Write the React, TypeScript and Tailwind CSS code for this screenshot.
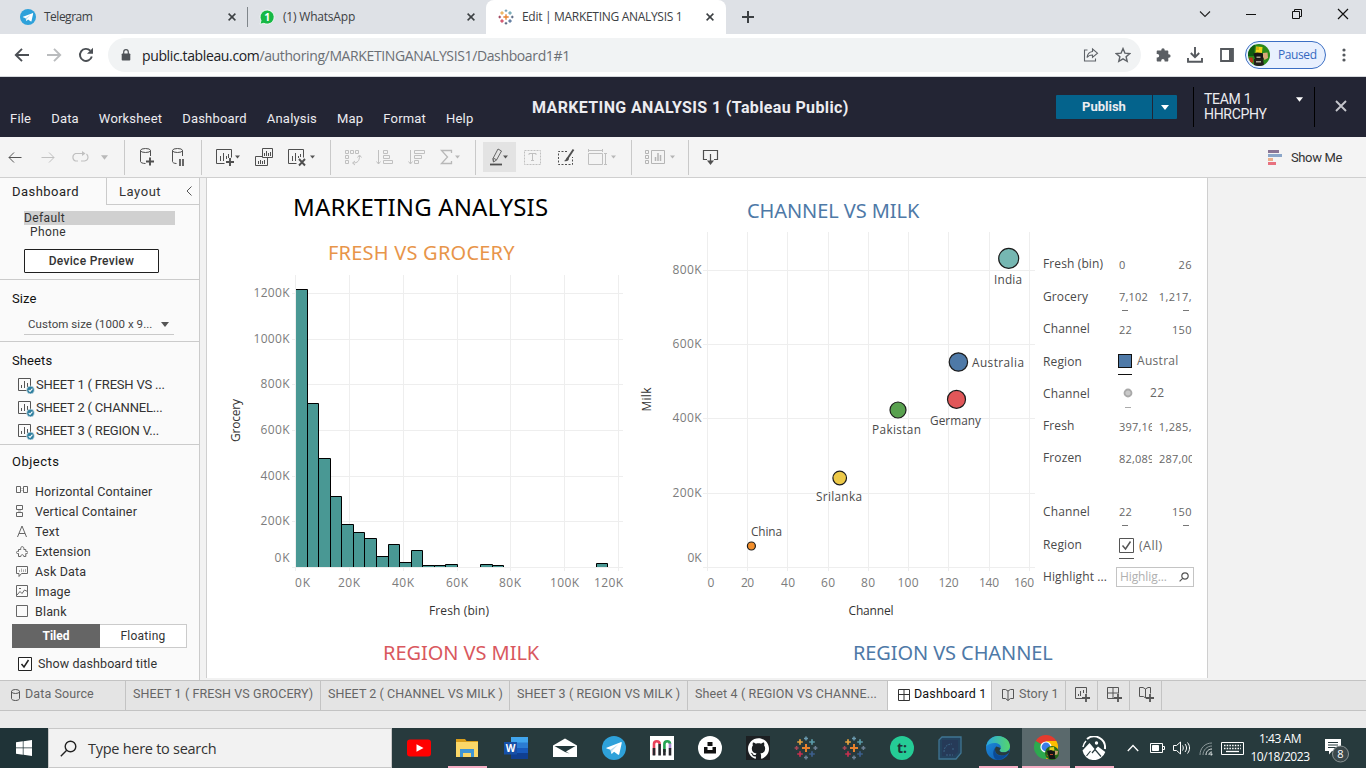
import React from "react";
import { SiGithub } from "react-icons/si";

type Kids = { children?: React.ReactNode };

/* ---------- shared icons ---------- */

function Telegram({ className }: { className: string }) {
  return (
    <svg viewBox="0 0 24 24" className={className}>
      <circle cx="12" cy="12" r="12" fill="#2ea1da" />
      <path d="M4.5 11.8 18.6 6.2c.8-.3 1.3.2 1.1 1.1l-2.4 10.6c-.2.9-.8 1-1.5.6l-3.7-2.7-1.9 1.8c-.5.4-.9.2-1-.3l-.7-3.6-3.9-1.2c-.5-.2-.5-.5-.1-.7z" fill="#fff" />
      <path d="m8.6 13.4 7.6-4.9-5.8 6-.4 2.8z" fill="#b9dcef" />
    </svg>
  );
}

function TableauMark({ className, dim }: { className: string; dim?: boolean }) {
  const plus = (x: number, y: number, r: number, c: string, w: number) => (
    <path key={`${x}-${y}`} d={`M${x - r} ${y}h${2 * r}M${x} ${y - r}v${2 * r}`} stroke={c} strokeWidth={w} />
  );
  const slate = dim ? "#6d8196" : "#4b5a77";
  return (
    <svg viewBox="0 0 24 24" className={className} fill="none">
      {plus(12, 12, 4, "#e8812d", 2)}
      {plus(6, 6, 2.8, "#e8a33d", 1.7)}
      {plus(18, 6, 2.8, "#5b9aa8", 1.7)}
      {plus(6, 18, 2.8, "#c9304f", 1.7)}
      {plus(18, 18, 2.8, "#3d5f8c", 1.7)}
      {plus(12, 2.6, 2, "#6b9bb0", 1.5)}
      {plus(12, 21.4, 2, slate, 1.5)}
      {plus(2.6, 12, 2, dim ? "#a94758" : "#9a3550", 1.5)}
      {plus(21.4, 12, 2, slate, 1.5)}
    </svg>
  );
}

function TabClose({ className }: { className: string }) {
  return (
    <svg viewBox="0 0 8 8" className={`h-2 w-2 shrink-0 ${className}`}>
      <path d="m.6.6 6.8 6.8M7.4.6.6 7.4" stroke="#3c4043" strokeWidth="1.5" />
    </svg>
  );
}

function Caret({ className, color = "#555" }: { className: string; color?: string }) {
  return (
    <svg viewBox="0 0 8 5" className={className}>
      <path d="M0 0h8L4 5z" fill={color} />
    </svg>
  );
}

/* ---------- browser chrome ---------- */

function TabStrip() {
  return (
    <div className="flex h-[34px] shrink-0 bg-[#dee1e6] font-['Open_Sans',sans-serif] text-[12px] tracking-[-0.3px] text-[#3c4043]">
      <div className="flex w-[248px] items-center pl-5">
        <Telegram className="h-4 w-4" />
        <span className="ml-2 flex-1 tracking-[-0.5px]">Telegram</span>
        <TabClose className="mr-[11px]" />
        <div className="h-5 w-px bg-[#80868b]" />
      </div>
      <div className="flex w-[238px] items-center pl-[11px]">
        <svg viewBox="0 0 16 16" className="h-4 w-4">
          <path d="M1 15.2 2 11.5A7 7 0 1 1 4.900 14.300z" fill="#17b845" stroke="#fff" strokeWidth=".8" />
          <text x="8.200" y="11.700" fontSize="10.500" fontWeight="700" fill="#fff" textAnchor="middle" fontFamily="Open Sans">1</text>
        </svg>
        <span className="ml-2 flex-1 tracking-[-0.2px]">(1) WhatsApp</span>
        <TabClose className="mr-[11px]" />
      </div>
      <div className="flex w-[240px] items-center rounded-t-lg bg-white pl-3">
        <TableauMark className="h-4 w-4" />
        <span className="ml-2 flex-1 whitespace-nowrap">Edit | MARKETING ANALYSIS 1</span>
        <TabClose className="mr-[12px]" />
      </div>
      <div className="flex flex-1 items-center pl-[16px]">
        <svg viewBox="0 0 12 12" className="h-3 w-3">
          <path d="M6 0v12M0 6h12" stroke="#3c4043" strokeWidth="2" />
        </svg>
      </div>
      <div className="flex h-7 items-center text-black">
        <svg viewBox="0 0 12 12" className="mr-[34px] h-3 w-3" fill="none" stroke="#222" strokeWidth="1.100">
          <path d="m1 3.500 5 5 5-5" />
        </svg>
        <svg viewBox="0 0 12 12" className="mr-[34px] h-3 w-3" fill="none" stroke="#111">
          <path d="M1 6.500h10" />
        </svg>
        <svg viewBox="0 0 12 12" className="mr-[34px] h-3 w-3" fill="none" stroke="#111">
          <path d="M1.500 3.500h7v7h-7zM3.500 3.500v-2h7v7h-2" />
        </svg>
        <svg viewBox="0 0 12 12" className="mr-[17px] h-3 w-3" fill="none" stroke="#111" strokeWidth="1.200">
          <path d="m1 1 10 10M11 1 1 11" />
        </svg>
      </div>
    </div>
  );
}

function AddressBar() {
  return (
    <div className="flex h-[43px] shrink-0 items-center border-b border-[#d5d8dc] bg-white pl-[14px] font-['Open_Sans',sans-serif]">
      <svg viewBox="0 0 16 16" className="h-4 w-4" fill="none" stroke="#4b4f54" strokeWidth="1.900">
        <path d="M15 8H2M8 1.800 1.800 8 8 14.200" />
      </svg>
      <svg viewBox="0 0 16 16" className="ml-4 h-4 w-4" fill="none" stroke="#babcbe" strokeWidth="1.900">
        <path d="M1 8h13M8 1.800 14.200 8 8 14.200" />
      </svg>
      <svg viewBox="0 0 16 16" className="ml-4 h-4 w-4" fill="none">
        <path d="M13.800 9.500A6 6 0 1 1 12.300 3.700" stroke="#4b4f54" strokeWidth="1.900" />
        <path d="M15 .8v6H9z" fill="#4b4f54" />
      </svg>
      <div className="ml-[14px] flex h-[34px] w-[1033px] items-center rounded-full bg-[#f1f3f4] pl-[13px]">
        <svg viewBox="0 0 10 12" className="h-3 w-[10px]">
          <path d="M1.500 4.500h7c.5 0 .8.3.8.8v5.400c0 .5-.3.8-.8.8h-7c-.5 0-.8-.3-.8-.8V5.300c0-.5.3-.8.8-.8z" fill="#4e5257" />
          <path d="M2.700 5V3a2.300 2.300 0 0 1 4.600 0v2" fill="none" stroke="#4e5257" strokeWidth="1.200" />
        </svg>
        <span className="ml-[11px] flex-1 text-[14px] tracking-[-0.37px] text-[#6b6f74]">
          <span className="text-[#202124]">public.tableau.com</span>/authoring/MARKETINGANALYSIS1/Dashboard1#1
        </span>
        <svg viewBox="0 0 16 16" className="h-4 w-4" fill="none" stroke="#5f6368" strokeWidth="1.100">
          <path d="M4.500 3H1.500v11h11v-2.500M9.500 2l5 4.200-5 4.200V8c-2.500 0-4.300.8-5.500 2.500C4.400 7 6.200 4.900 9.500 4.500z" />
        </svg>
        <svg viewBox="0 0 16 16" className="mr-[10px] ml-4 h-4 w-4" fill="none" stroke="#5f6368" strokeWidth="1.400">
          <path d="m8 1.600 1.900 4.500 4.900.4-3.700 3.200 1.100 4.700L8 11.900l-4.200 2.500 1.100-4.700L1.200 6.500l4.900-.4z" />
        </svg>
      </div>
      <svg viewBox="0 0 16 16" className="ml-[14px] h-4 w-4" fill="#5a5e63">
        <path d="M6.300 2.900a1.700 1.700 0 0 1 3.400 0v.6h2.600c.6 0 1 .4 1 1v2.700h.5a1.800 1.800 0 0 1 0 3.600h-.5v2.700c0 .6-.4 1-1 1H9.600v-.7a1.700 1.700 0 0 0-3.400 0v.7H2.700c-.6 0-1-.4-1-1v-3.100h.8a1.700 1.700 0 0 0 0-3.400h-.8V4.500c0-.6.4-1 1-1h3.600z" />
      </svg>
      <svg viewBox="0 0 16 16" className="ml-4 h-4 w-4" fill="none" stroke="#55595e" strokeWidth="1.900">
        <path d="M8 0v10M3.800 6 8 10.200 12.200 6M1 11v3.700h14V11" />
      </svg>
      <svg viewBox="0 0 14 14" className="ml-[17px] h-[14px] w-[14px]" fill="none">
        <path d="M1 1h12v12H1z" stroke="#55595e" strokeWidth="1.800" />
        <path d="M9 1h4v12H9z" fill="#55595e" />
      </svg>
      <div className="ml-[11px] flex h-7 w-[81px] items-center rounded-full border border-[#3b6fc4] bg-[#e8f0fe] pl-[2px]">
        <svg viewBox="0 0 22 22" className="h-[22px] w-[22px]">
          <defs>
            <clipPath id="avatar"><circle cx="11" cy="11" r="11" /></clipPath>
          </defs>
          <g clipPath="url(#avatar)">
            <path d="M0 0h22v22H0z" fill="#2a8a1a" />
            <path d="M0 0h7l-1 12H0z" fill="#0f5a12" />
            <path d="M8 2.500l6.500.5-.5 6H7.500z" fill="#f0d51c" />
            <path d="M8 3h3v3H8z" fill="#d9b010" />
            <path d="M5.500 9.500 9 8.500l5 .5 2.500 3-1 3.500H7z" fill="#161616" />
            <path d="M15 9l4.500-.5L20 14l-3.500 2-1.500-3z" fill="#d9a878" />
            <path d="m6 15 9-.5 1 7.500H6z" fill="#241f1a" />
            <path d="M8.500 12.500h4V14h-4zM8 17h5v1.500H8z" fill="#a9a594" />
            <path d="M1 13.500h3.500l1 5H2z" fill="#b8381a" />
          </g>
        </svg>
        <span className="ml-[8px] text-[12px] tracking-[-0.4px] text-[#3568c0]">Paused</span>
      </div>
      <svg viewBox="0 0 4 14" className="ml-4 h-[14px] w-1" fill="#55595e">
        <circle cx="2" cy="2" r="1.600" /><circle cx="2" cy="7" r="1.600" /><circle cx="2" cy="12" r="1.600" />
      </svg>
    </div>
  );
}

/* ---------- Tableau header and toolbar ---------- */

const menus = ["File", "Data", "Worksheet", "Dashboard", "Analysis", "Map", "Format", "Help"];

function Header() {
  return (
    <div className="flex h-[60px] shrink-0 bg-[#232534] font-['Roboto',sans-serif] text-[#ececf0]">
      <div className="flex w-[532px] items-end gap-5 pb-[10px] pl-[10px] text-[13px] leading-4 tracking-[0.19px]">
        {menus.map((m) => <span key={m}>{m}</span>)}
      </div>
      <div className="w-[524px] pt-[21px] text-[16px] leading-5 font-bold tracking-[0.37px] whitespace-nowrap">MARKETING ANALYSIS 1 (Tableau Public)</div>
      <div className="flex h-full w-[137px] items-center">
        <div className="flex h-6 w-24 items-center justify-center rounded-l-[1px] bg-[#04638c] text-[13px] font-bold">Publish</div>
        <div className="ml-px flex h-6 w-6 items-center justify-center rounded-r-[1px] bg-[#04638c]">
          <Caret className="h-[5px] w-2" color="#fff" />
        </div>
      </div>
      <div className="mt-[10px] flex h-10 w-[122px] border-x border-black pl-[10px] text-[14px] leading-[15px]">
        <span className="w-[92px] pt-[5px] tracking-[-0.3px]">TEAM 1 HHRCPHY</span>
        <Caret className="mt-[10px] h-[5px] w-[7px]" color="#fff" />
      </div>
      <svg viewBox="0 0 12 12" className="mt-[23px] ml-5 h-3 w-3">
        <path d="m1 1 10 10M11 1 1 11" stroke="#c5c6cc" strokeWidth="1.900" />
      </svg>
    </div>
  );
}

const DARK = "#4f4f4f";
const DIM = "#c0c0c0";

function Glyph({ className, d, color = DARK, children }: { className: string; d?: string; color?: string } & Kids) {
  return (
    <svg viewBox="0 0 20 20" className={`h-5 w-5 shrink-0 ${className}`} fill="none" stroke={color} strokeWidth="1">
      {d && <path d={d} />}
      {children}
    </svg>
  );
}

function Sep({ className }: { className: string }) {
  return <div className={`h-[35px] w-px shrink-0 bg-[#c9c9c9] ${className}`} />;
}

function Toolbar() {
  const tc = "h-1 w-[5px] shrink-0";
  return (
    <div className="flex h-[41px] shrink-0 items-center border-b border-[#cfcfcf] bg-[#f4f4f4] font-['Roboto',sans-serif]">
      <Glyph className="ml-[5px]" d="M16.500 10.500H4M9 5.500l-5 5 5 5" color="#555" />
      <Glyph className="ml-[13px]" d="M3.500 10.500H16M11 5.500l5 5-5 5" color={DIM} />
      <Glyph className="ml-[12px]" color={DIM}>
        <path d="M8 14H5.500a4 4 0 0 1 0-7.500H13M11 14h3.500a4 4 0 0 0 3.500-3.700c0-1.500-.6-2.500-1.500-3.300" strokeWidth="1.200" />
        <path d="m12 4 3.500 2.500L12 9z" fill={DIM} stroke="none" />
      </Glyph>
      <Caret className="ml-[11px] h-[5px] w-[7px]" color="#b9b9b9" />
      <Sep className="ml-[16px]" />
      <Glyph className="ml-[12px]">
        <ellipse cx="8.500" cy="3.500" rx="5" ry="2" />
        <path d="M3.500 3.500v11c0 1 2 2 5 2M13.500 3.500v5.500" />
        <path d="M13 10.500v8M9 14.500h8" strokeWidth="1.900" />
      </Glyph>
      <Glyph className="ml-[12px]">
        <ellipse cx="8.500" cy="3.500" rx="5" ry="2" />
        <path d="M3.500 3.500v11c0 1 1.600 2 4 2M13.500 3.500v5.500" />
        <path d="M11 12v7M14 12v7" strokeWidth="1.700" />
      </Glyph>
      <Sep className="ml-[12px]" />
      <Glyph className="ml-[13px]">
        <path d="M9.500 16.500h-8v-14h15v8M5.500 14v-5M8.500 14V6M11.500 12V9M13.500 11V7" />
        <path d="M15 11v8M11 15h8" strokeWidth="1.900" />
      </Glyph>
      <Caret className={tc} />
      <Glyph className="ml-[14px]">
        <path d="M8.500 1.500h10v9h-10zM8 9.500H1.500v9h12v-7.500M10.500 9V6M12.500 9V4M14.500 9V6M16.500 9V5M4.500 17v-3M6.500 17v-4M8.500 17v-3M10.500 17v-4" />
      </Glyph>
      <Glyph className="ml-[13px]">
        <path d="M9.500 16.500h-8v-14h15v8M5.500 14v-5M8.500 14V6M11.500 11V9M13.500 10V7" />
        <path d="m12 12 6 6.500M18 12l-6 6.500" strokeWidth="1.900" />
      </Glyph>
      <Caret className={`${tc} ml-[3px]`} />
      <Sep className="ml-[15px]" />
      <Glyph className="ml-[13px]" color={DIM}>
        <path d="M1.500 3.500h3v3h-3zM6.500 3.500h3v3h-3zM11.500 3.500h3v3h-3zM1.500 8.500h3v3h-3zM1.500 13.500h3v3h-3z" />
        <path d="M15.500 9c0 5-2 7-6.500 7M13.500 10.500l2-2.500 2 2.500M11 14l-2.500 2 2.500 2" />
      </Glyph>
      <Glyph className="ml-[11px]" color={DIM} d="M3.500 3v14M1.500 14.500l2 2.500 2-2.500M8.500 3.500h4v3h-4zM8.500 8.500h6v3h-6zM8.500 13.500h9v3h-9z" />
      <Glyph className="ml-[12px]" color={DIM} d="M3.500 3v14M1.500 14.500l2 2.500 2-2.500M7.500 3.500h10v3h-10zM7.500 8.500h7v3h-7zM7.500 13.500h4v3h-4z" />
      <Glyph className="ml-[10px]" color="#b8b8b8">
        <path d="M14.500 6V3.500h-10l6 6.500-6 6.500h10V14" strokeWidth="1.300" />
      </Glyph>
      <Caret className={`${tc} -ml-[2px]`} color="#b8b8b8" />
      <Sep className="ml-[15px]" />
      <div className="ml-[7px] flex h-[30px] w-[33px] shrink-0 items-center bg-[#e3e3e3]">
        <Glyph className="ml-[4px]">
          <path d="m6 11.500 5-9.500 3.500 2-5 9-3 2zM6.300 11l3.500 2M6.500 15l-.5-3.500" stroke="#666" />
          <path d="M3 17.500h12" strokeWidth="1.800" />
        </Glyph>
        <Caret className="-ml-[4px] h-1 w-[5px] shrink-0" />
      </div>
      <Glyph className="ml-[7px]" color={DIM}>
        <path d="M1.500 3.500h16v14h-16z" strokeDasharray="2 1" />
        <path d="M6 8V6.500h7V8M9.500 6.500v7M8 13.500h3" />
      </Glyph>
      <Glyph className="ml-[14px]">
        <path d="M10 4.500H1.500v13h14V10" strokeDasharray="2 1.500" />
        <path d="m16.500 2.500-6 9" strokeWidth="1.900" />
        <path d="M10.500 10.500c-2 .5-1 2.500-3.500 3.500 3 .8 5-.5 5-2.500z" fill={DARK} stroke="none" />
      </Glyph>
      <Glyph className="ml-[10px]" color={DIM}>
        <path d="M1.500 6.500h14v11h-14zM1 3.500h15M1.500 2v3M15.500 2v3M18.500 7v10M17 6.500h3M17 17.500h3" />
      </Glyph>
      <Caret className={`${tc} ml-[4px]`} color="#b8b8b8" />
      <Sep className="ml-[15px]" />
      <Glyph className="ml-[13px]" color="#b5b5b5">
        <path d="M.5 3.500h3v3h-3zM.5 8.500h3v3h-3zM.5 13.500h3v3h-3zM6.500 3.500h13v13h-13z" />
        <path d="M10.500 14v-4M13 14V6M15.500 14V8" strokeWidth="1.500" />
      </Glyph>
      <Caret className={`${tc} ml-[5px]`} color="#b5b5b5" />
      <Sep className="ml-[13px]" />
      <Glyph className="ml-[13px]">
        <path d="M5 12.500H1.500v-9h14v9H12M8.500 7v8" strokeWidth="1.200" />
        <path d="M5 13.500h7L8.500 18z" fill={DARK} stroke="none" />
      </Glyph>
      <div className="flex-1" />
      <svg viewBox="0 0 14 15" className="h-[15px] w-[14px]">
        <path d="M0 0h11v3H0z" fill="#8a7595" /><path d="M0 4h14v3H0z" fill="#8ba6c9" />
        <path d="M0 8h5v3H0z" fill="#eaae8b" /><path d="M0 12h8v3H0z" fill="#e8717f" />
      </svg>
      <span className="mr-[24px] ml-[9px] pt-[2px] text-[13px] tracking-[-0.35px] text-[#333]">Show Me</span>
    </div>
  );
}

/* ---------- left panel ---------- */

function SheetItem({ name }: { name: string }) {
  return (
    <div className="flex h-[23px] items-center pl-[18px] text-[13px] tracking-[-0.2px]">
      <svg viewBox="0 0 17 17" className="mt-[1px] h-[17px] w-[17px] shrink-0" fill="none">
        <path d="M.5 1.500h12v12H.5zM3.500 11V8M6.500 11V4M9.500 11V6" stroke="#555" />
        <circle cx="12.500" cy="13" r="3.900" fill="#2f7f9f" stroke="#fafafa" strokeWidth=".6" />
        <path d="m10.700 13 1.300 1.400 2.400-2.700" stroke="#fff" strokeWidth="1.100" />
      </svg>
      <span className="ml-[1px] whitespace-nowrap">{name}</span>
    </div>
  );
}

const objects: { name: string; icon: React.ReactNode }[] = [
  { name: "Horizontal Container", icon: <><path d="M.5 1.500h4v6h-4zM7.500 1.500h4v6h-4z" /><path d="M5 3.500h2M5 5.500h2" stroke="#c4c4c4" /></> },
  { name: "Vertical Container", icon: <><path d="M.5.500h6v4h-6zM.5 7.500h6v4h-6z" /><path d="M2 6h3" stroke="#999" /></> },
  { name: "Text", icon: <path d="M1.500 12 6 1l4.500 11M3 8.500h6" /> },
  { name: "Extension", icon: <path d="M2.500 11.500v-3c-3 .6-3-2.700 0-2V4.500h2.300c-1-3.800 4-3.800 3 0h2v2c2.900-.7 2.900 2.600 0 2v3h-2c0-2.400-3-2.400-3 0z" /> },
  { name: "Ask Data", icon: <><path d="M.5 1.500h11v7h-6l-2.500 3v-3H.5z" /><path d="M3.500 7V5M5.500 7V3.500M7.500 7V4.500M9.500 7V4" stroke="#aaa" /></> },
  { name: "Image", icon: <path d="M.5.500h11v11H.5zM1 10l3-3.500 2 2L8.500 5l3 1.500M3 3.500h2" /> },
  { name: "Blank", icon: <path d="M.5.500h11v11H.5z" /> },
];

function Sidebar() {
  return (
    <div className="flex w-[200px] shrink-0 flex-col border-r border-[#cbcbcb] bg-[#fafafa] text-[#333]">
      <div className="flex h-[27px] shrink-0 text-[13px] leading-[27px]">
        <div className="w-[106px] pl-3 tracking-[0.45px] text-[#222]">Dashboard</div>
        <div className="flex flex-1 items-center border-b border-l border-[#cbcbcb] pl-3 tracking-[0.55px]">
          <span className="flex-1">Layout</span>
          <svg viewBox="0 0 6 10" className="mr-[7px] h-[10px] w-[6px]"><path d="M5.500.5 1 5l4.500 4.500" fill="none" stroke="#555" /></svg>
        </div>
      </div>
      <div className="mt-[6px] ml-6 h-[14px] w-[151px] bg-[#d0d0d0] text-[12px] leading-[14px] tracking-[0.4px]">Default</div>
      <div className="ml-[30px] h-[14px] text-[12px] leading-[14px] tracking-[0.4px]">Phone</div>
      <div className="mt-[10px] ml-6 flex h-6 w-[135px] shrink-0 items-center justify-center rounded-[1px] border border-[#1f1f1f] bg-white text-[12px] font-medium tracking-[0.3px]">Device Preview</div>
      <div className="mt-[6px] h-[62px] shrink-0 border-t border-[#cbcbcb]">
        <div className="h-[31px] pt-[11px] pl-3 text-[13px] leading-4 tracking-[0.1px] text-[#111]">Size</div>
        <div className="ml-6 flex h-[24px] w-[150px] items-center border-b border-[#c9c9c9] pt-[4px] pl-1 text-[11.500px] tracking-[0.06px] text-[#444]">
          <span className="flex-1 whitespace-nowrap">Custom size (1000 x 9...</span>
          <Caret className="mr-[5px] h-[5px] w-2" color="#555" />
        </div>
      </div>
      <div className="h-[103px] shrink-0 overflow-hidden border-t border-[#cbcbcb] pt-[11px]">
        <div className="mb-[4px] pl-3 text-[13px] leading-4 tracking-[0.1px] text-[#111]">Sheets</div>
        <SheetItem name="SHEET 1 ( FRESH VS ..." />
        <SheetItem name="SHEET 2 ( CHANNEL..." />
        <SheetItem name="SHEET 3 ( REGION V..." />
      </div>
      <div className="flex-1 border-t border-[#cbcbcb] pt-[9px]">
        <div className="mb-[11px] pl-3 text-[13px] leading-4 tracking-[0.5px] text-[#111]">Objects</div>
        {objects.map((o) => (
          <div key={o.name} className="flex h-5 items-center pl-4 text-[12.500px] tracking-[0.15px]">
            <svg viewBox="0 0 12 13" className="h-[13px] w-3" fill="none" stroke="#666">{o.icon}</svg>
            <span className="ml-[7px] pt-[2px]">{o.name}</span>
          </div>
        ))}
        <div className="mt-[3px] ml-3 flex h-6 w-[175px] text-[12px] leading-6">
          <div className="w-[88px] bg-[#656565] text-center font-bold text-white">Tiled</div>
          <div className="flex-1 border border-l-0 border-[#cbcbcb] bg-white text-center leading-[22px] tracking-[0.25px]">Floating</div>
        </div>
        <div className="mt-[9px] ml-[18px] flex items-center text-[12.500px] leading-[14px]">
          <svg viewBox="0 0 14 14" className="h-[14px] w-[14px]" fill="none" stroke="#222"><path d="M.5.500h13v13H.5z" fill="#fff" /><path d="m3.500 7 2.500 3 4.500-7" strokeWidth="1.500" /></svg>
          <span className="ml-[6px] tracking-[0.1px] whitespace-nowrap">Show dashboard title</span>
        </div>
      </div>
    </div>
  );
}

/* ---------- charts ---------- */

function Label({ x, y, w, children, anchor = "middle", fill = "#7c7c7c", size = 12, turn }: {
  x: number; y: number; w: number; anchor?: "start" | "middle" | "end"; fill?: string; size?: number; turn?: boolean;
} & Kids) {
  return (
    <text x={x} y={y} textAnchor={anchor} textLength={w} fontSize={size} fill={fill} transform={turn ? `rotate(-90 ${x} ${y})` : undefined}>
      {children}
    </text>
  );
}

/* left edge, right edge, top */
const bars: [number, number, number][] = [
  [295.5, 307.5, 289.5], [307.5, 318.5, 403.5], [318.5, 330.5, 458.5], [330.5, 341.5, 496.5], [341.5, 353.5, 524.5],
  [353.5, 364.5, 532.5], [364.5, 376.5, 538.5], [376.5, 388.5, 556.5], [388.5, 399.5, 544.5], [399.5, 411.5, 562.5],
  [411.5, 422.5, 550.5], [422.5, 434.5, 565.5], [434.5, 445.5, 565.5], [445.5, 457.5, 564.5], [480.5, 492.5, 564.5],
  [492.5, 503.5, 565.5], [596.5, 607.5, 563.5],
];

function Histogram() {
  const gx = [295.5, 349.5, 403.5, 457.5, 510.5, 564.5, 618.5];
  const gy = [293.5, 339.5, 384.5, 430.5, 476.5, 521.5, 567.5];
  return (
    <svg viewBox="207 270 428 360" className="h-[360px] w-[428px]" fontFamily="Open Sans, sans-serif">
      <g stroke="#eee">
        {gx.map((x) => <path key={x} d={`M${x} 275V571`} />)}
        {gy.map((y) => <path key={y} d={`M292 ${y}H623`} />)}
      </g>
      {bars.map(([a, b, t], i) => (
        <g key={a}>
          <path d={`M${i ? a : 296} 567V${t}H${b}V567`} fill="#499894" />
          <path d={i ? `M${a} 567V${t}H${b}V567` : `M296 ${t}H${b}V567`} fill="none" stroke="#000" />
        </g>
      ))}
      {["1200K", "1000K", "800K", "600K", "400K", "200K", "0K"].map((s, i) => (
        <Label key={s} x={289.5} y={[297, 343, 388, 434, 480, 525, 562][i]} w={[36, 36, 29, 29, 29, 29, 15][i]} anchor="end">{s}</Label>
      ))}
      {["0K", "20K", "40K", "60K", "80K", "100K", "120K"].map((s, i) => (
        <Label key={s} x={[302.5, 349, 403, 457, 510, 564.5, 608.5][i]} y={587} w={[15, 22, 22, 22, 22, 29, 29][i]}>{s}</Label>
      ))}
      <Label x={459} y={615} w={60} fill="#333">Fresh (bin)</Label>
      <Label x={239.5} y={420.5} w={43} fill="#333" turn>Grocery</Label>
    </svg>
  );
}

const points = [
  { n: "India", x: 1008.7, y: 258.4, r: 10, c: "#76b7b2", lx: 1008, ly: 284, w: 28 },
  { n: "Australia", x: 958.4, y: 362, r: 9.2, c: "#4e79a7", lx: 998, ly: 367, w: 52 },
  { n: "Germany", x: 956.5, y: 399.4, r: 9, c: "#e15759", lx: 955.5, ly: 425, w: 51 },
  { n: "Pakistan", x: 898, y: 410, r: 8, c: "#59a14f", lx: 896.500, ly: 434, w: 49 },
  { n: "Srilanka", x: 839.7, y: 478, r: 6.800, c: "#edc948", lx: 839, ly: 501, w: 46 },
  { n: "China", x: 751.4, y: 546, r: 4, c: "#f28e2b", lx: 766.500, ly: 536, w: 31 },
];

function Scatter() {
  const gx = [707.5, 747.5, 787.5, 828.5, 868.5, 908.5, 948.5, 989.5, 1029.5];
  const gy = [270.5, 344.5, 418.5, 493.5, 567.5];
  return (
    <svg viewBox="635 228 405 402" className="h-[402px] w-[405px]" fontFamily="Open Sans, sans-serif">
      <g stroke="#eee">
        {gx.map((x) => <path key={x} d={`M${x} 232V571`} />)}
        {gy.map((y) => <path key={y} d={`M703 ${y}H1035`} />)}
      </g>
      {["800K", "600K", "400K", "200K", "0K"].map((s, i) => (
        <Label key={s} x={701.500} y={[274, 348, 422, 497, 562][i]} w={i < 4 ? 29 : 14} anchor="end">{s}</Label>
      ))}
      {["0", "20", "40", "60", "80", "100", "120", "140", "160"].map((s, i) => (
        <Label key={s} x={[711, 747.5, 788, 828, 868, 908, 948.5, 989, 1024][i]} y={587} w={[6, 13, 14, 14, 14, 21, 20, 20, 20][i]}>{s}</Label>
      ))}
      {points.map((p) => (
        <g key={p.n}>
          <circle cx={p.x} cy={p.y} r={p.r} fill={p.c} stroke="#1c1c1c" strokeWidth="1.200" />
          <Label x={p.lx} y={p.ly} w={p.w} fill="#4a4a4a" size={11.800}>{p.n}</Label>
        </g>
      ))}
      <Label x={871} y={615} w={45} fill="#333">Channel</Label>
      <Label x={651} y={399.500} w={24} fill="#333" turn>Milk</Label>
    </svg>
  );
}

/* ---------- legends ---------- */

function Row({ label, className, children }: { label: string; className: string } & Kids) {
  return (
    <div className={`flex items-center ${className}`}>
      <span className="w-[76px] shrink-0 text-[12px] tracking-[0.12px] whitespace-nowrap text-[#4a4a4a]">{label}</span>
      {children}
    </div>
  );
}

function Range({ lo, hi, cut, dashes }: { lo: string; hi: string; cut?: boolean; dashes?: boolean }) {
  return (
    <div className="w-[73px] pt-px text-[11px] leading-4 text-[#666]">
      <div className={dashes ? "mt-[11px] flex justify-between" : "flex justify-between"}>
        <span className="w-[33px] overflow-hidden tracking-[0.2px]">{lo}</span>
        <span className={cut ? "w-[33px] overflow-hidden tracking-[0.2px]" : "tracking-[0.4px]"}>{hi}</span>
      </div>
      {dashes && (
        <div className="flex h-[11px] justify-between pt-[5px] pr-[3px] pl-[3px]">
          <div className="h-px w-[6px] bg-[#777]" /><div className="h-px w-[6px] bg-[#777]" />
        </div>
      )}
    </div>
  );
}

function Legends() {
  return (
    <div className="w-[167px] pt-[70px] pl-[3px] font-['Open_Sans',sans-serif]">
      <Row label="Fresh (bin)" className="h-8"><Range lo="0" hi="26" /></Row>
      <Row label="Grocery" className="h-[33px]"><Range lo="7,102" hi="1,217," dashes /></Row>
      <Row label="Channel" className="h-8"><Range lo="22" hi="150" /></Row>
      <Row label="Region" className="h-[33px]">
        <div className="-ml-px w-[14px]">
          <div className="mt-[6px] h-[14px] w-[14px] border border-[#111] bg-[#4e79a7]" />
          <div className="mt-[6px] h-px w-[14px] bg-[#111]" />
        </div>
        <span className="ml-[5px] -translate-y-px text-[12px] tracking-[0.3px] text-[#666]">Austral</span>
      </Row>
      <Row label="Channel" className="h-8">
        <svg viewBox="0 0 10 20" className="mt-[8px] ml-1 h-5 w-[10px]" fill="none">
          <circle cx="5" cy="5" r="3.500" fill="#c9c9c9" stroke="#a9a9a9" strokeWidth="1.800" />
          <path d="M2 19.500h6" stroke="#aaa" />
        </svg>
        <span className="ml-[17px] -translate-y-px text-[12px] tracking-[0.3px] text-[#666]">22</span>
      </Row>
      <Row label="Fresh" className="h-8"><Range lo="397,160" hi="1,285," /></Row>
      <Row label="Frozen" className="h-8"><Range lo="82,089" hi="287,004" cut /></Row>
      <Row label="Channel" className="mt-[21px] h-[33px]"><Range lo="22" hi="150" dashes /></Row>
      <Row label="Region" className="h-[33px]">
        <svg viewBox="0 0 15 21" className="mt-[7px] h-[21px] w-[15px]" fill="none" stroke="#555">
          <path d="M.5.500h14v14H.5z" fill="#fff" /><path d="m3.500 7.500 3 3.500 5-7.500" strokeWidth="1.500" /><path d="M0 20.500h15" />
        </svg>
        <span className="ml-[5px] pt-[3px] text-[12.500px] tracking-[0.4px] text-[#666]">(All)</span>
      </Row>
      <Row label="Highlight ..." className="h-8">
        <div className="-ml-[3px] flex h-5 w-[78px] items-center border border-[#c4c4c4] pl-[3px] text-[12px] text-[#b0b0b0]">
          <span className="flex-1 tracking-[-0.1px]">Highlig...</span>
          <svg viewBox="0 0 10 10" className="mr-[4px] h-[10px] w-[10px]" fill="none" stroke="#555" strokeWidth="1.200"><circle cx="6" cy="4" r="3.200" /><path d="M3.700 6.300.6 9.400" /></svg>
        </div>
      </Row>
    </div>
  );
}

function Dashboard() {
  return (
    <div className="mb-[2px] ml-[6px] flex w-[1002px] shrink-0 overflow-hidden border-x border-[#cfcfcf] bg-white font-['Noto_Sans',sans-serif] whitespace-nowrap">
      <div className="w-[428px] shrink-0">
        <div className="h-[60px] pt-[13px] pl-[86px] text-[24px] leading-8 tracking-[0.15px] text-black">MARKETING ANALYSIS</div>
        <div className="h-[32px] pl-[121px] text-[20px] leading-[30px] tracking-[0.22px] text-[#e8954a]">FRESH VS GROCERY</div>
        <Histogram />
        <div className="pt-[8px] pl-[176px] text-[20px] leading-[30px] tracking-[-0.05px] text-[#d9585e]">REGION VS MILK</div>
      </div>
      <div className="w-[405px] shrink-0">
        <div className="h-[50px] pt-[18px] pl-[112px] text-[20px] leading-[30px] tracking-[-0.08px] text-[#4e79a7]">CHANNEL VS MILK</div>
        <Scatter />
        <div className="w-[460px] pt-[8px] pl-[218px] text-[20px] leading-[30px] tracking-[-0.1px] text-[#4e79a7]">REGION VS CHANNEL</div>
      </div>
      <Legends />
    </div>
  );
}

/* ---------- sheet tabs ---------- */

function SheetTabs() {
  const cell = "flex shrink-0 items-center border-r border-[#c3c3c3] pb-[2px] whitespace-nowrap";
  const chart = "M8 11.500H.5V.500h11v6M3.500 9V7M5.500 9V4M8.500 6V3";
  const grid = "M8 11.500H.5V.500h11v6M6 .5v11M.5 6h11";
  const book = "M6.500 2v9l-2-1.500H.5V.500h3.500l2.500 1.500L9 .500h2.500v6";
  return (
    <div className="flex h-[31px] shrink-0 border-y border-[#c3c3c3] bg-[#e4e4e4] font-['Roboto',sans-serif] text-[12.500px] tracking-[0.1px] text-[#666]">
      <div className={`${cell} w-[126px] pl-[11px]`}>
        <svg viewBox="0 0 9 12" className="mr-[5px] h-3 w-[9px]" fill="none" stroke="#555"><ellipse cx="4.500" cy="2.500" rx="4" ry="2" /><path d="M.5 2.500v7c0 1.100 1.800 2 4 2s4-.9 4-2v-7" /></svg>
        Data Source
      </div>
      <div className={`${cell} w-[195px] pl-[7px]`}>SHEET 1 ( FRESH VS GROCERY)</div>
      <div className={`${cell} w-[189px] pl-[7px] tracking-[0.06px]`}>SHEET 2 ( CHANNEL VS MILK )</div>
      <div className={`${cell} w-[178px] pl-[7px]`}>SHEET 3 ( REGION VS MILK )</div>
      <div className={`${cell} w-[200px] pl-[7px] tracking-[0.13px]`}>Sheet 4 ( REGION VS CHANNE...</div>
      <div className={`${cell} w-[104px] bg-white pl-[10px] tracking-[0.17px] text-[#111]`}>
        <svg viewBox="0 0 12 12" className="mr-[4px] h-3 w-3" fill="none" stroke="#333"><path d="M.5.500h11v11H.5zM6 .5v11M.5 5.500h11" /></svg>
        Dashboard 1
      </div>
      <div className={`${cell} w-[74px] pl-[10px]`}>
        <svg viewBox="0 0 12 12" className="mr-[5px] h-3 w-3" fill="none" stroke="#555"><path d="M.5.500h3L6 2l2.500-1.500h3v9h-3L6 11.500 3.500 9.500h-3zM6 2v9.500" /></svg>
        Story 1
      </div>
      {[chart, grid, book].map((d, i) => (
        <div key={i} className={`${cell} w-8 pl-[9px]`}>
          <svg viewBox="0 0 15 15" className="h-[15px] w-[15px]" fill="none" stroke="#555"><path d={d} /><path d="M11 7v8M7 11h8" strokeWidth="1.800" /></svg>
        </div>
      ))}
    </div>
  );
}

/* ---------- taskbar ---------- */

const task = "h-6 w-6";

function EdgeIcon({ className }: { className: string }) {
  return (
    <svg viewBox="0 0 24 24" className={className}>
      <defs>
        <linearGradient id="edgeA" x1="0" y1="0" x2="1" y2="0"><stop offset="0" stopColor="#2aa8e0" /><stop offset="1" stopColor="#55d66b" /></linearGradient>
        <linearGradient id="edgeB" x1="0" y1="0" x2="1" y2="1"><stop offset="0" stopColor="#1f8fe0" /><stop offset="1" stopColor="#0c54a8" /></linearGradient>
      </defs>
      <circle cx="12" cy="12" r="12" fill="url(#edgeB)" />
      <path d="M.3 10.500C1.200 4.200 6.200 0 12 0c7.200 0 12 5.200 12 10.300 0 3.600-2.800 6-6.200 6-2.900 0-4.300-1-4.300-1.800 0-.6 1.300-1.200 1.300-3.200C14.800 8.600 12 7 8.700 7 5 7 1.800 8.500.3 10.500z" fill="url(#edgeA)" />
      <path d="M9 13.500C9 19 14 21.500 21 18.200c-2.300 3.600-5.400 5.400-9.400 5.800C6.500 23 5.500 14 10.500 10.500c-1 .8-1.500 1.700-1.500 3z" fill="#0b4a96" />
      <path d="M14.700 12c-.3 1.300-1.200 1.900-1.200 2.500 0 .8 1.400 1.800 4.300 1.800 1.900 0 3.500-.7 4.600-1.900l1.200 1.500-2.600 2.300C15 21 9 19 9 13.500c0-1.300.5-2.200 1.500-3z" fill="#293b3e" />
    </svg>
  );
}

function ChromeIcon({ className }: { className: string }) {
  return (
    <svg viewBox="0 0 26 26" className={className}>
      <path d="M12 12 1.600 6A12 12 0 0 1 22.400 6z" fill="#e33b2e" />
      <path d="M12 12 1.600 6a12 12 0 0 0 10.400 18l5.200-9z" fill="#2da94f" />
      <path d="M12 6h10.400A12 12 0 0 1 12 24l5.200-9z" fill="#fdbd00" />
      <circle cx="12" cy="12" r="5.600" fill="#fff" /><circle cx="12" cy="12" r="4.400" fill="#3a7de8" />
      <circle cx="18" cy="18" r="7" fill="#256a16" />
      <path d="M15.500 12.500 20 12l.5 3.500-5 .5z" fill="#e3ce1b" /><path d="m13 16 4-1 4.500 2-1 2.500 1 4.500h-6z" fill="#151515" /><path d="m21 15.500 3 .5-.5 3.500-2.500.5z" fill="#c9a06c" />
      <path d="M16 19.500h3M12.500 20l1.500 1" stroke="#b8492a" />
    </svg>
  );
}

const apps: { icon: React.ReactNode; open?: boolean; active?: boolean; gap?: boolean }[] = [
  { icon: <svg viewBox="0 0 24 24" className={task}><path d="M3 3.500h18c2 0 3 1 3 3v11c0 2-1 3-3 3H3c-2 0-3-1-3-3v-11c0-2 1-3 3-3z" fill="#f00" /><path d="m9.500 8.300 7 3.700-7 3.700z" fill="#fff" /></svg> },
  { open: true, icon: <svg viewBox="0 0 24 24" className={task}><path d="M1 3h9l1.500 2H23v16H1z" fill="#d99e1b" /><path d="M1 6h22v15H1z" fill="#fbd768" /><path d="M5 13h14v8h-3v-4H8v4H5z" fill="#3f95d5" /></svg> },
  { gap: true, icon: <svg viewBox="0 0 24 24" className={task}><path d="M7 1h17v6H7z" fill="#41a5ee" /><path d="M7 6.500h17V12H7z" fill="#2b7cd3" /><path d="M7 12h17v6H7z" fill="#185abd" /><path d="M7 17h17v6H7z" fill="#103f91" /><path d="M0 6h13v12.500H0z" fill="#1650a8" /><text x="6.500" y="16" fontSize="10" fontWeight="700" fill="#fff" textAnchor="middle" fontFamily="Open Sans">W</text></svg> },
  { gap: true, icon: <svg viewBox="0 0 24 24" className={task}><path d="M12 2.500 24 9.500V21H0V9.500z" fill="#fff" /><path d="M1.500 10h21L13 15.500l3.500 2L12 16z" fill="#23383b" /></svg> },
  { gap: true, icon: <Telegram className={task} /> },
  { icon: <svg viewBox="0 0 24 24" className={task} fill="none" strokeWidth="2.600"><path d="M0 0h24v24H0z" fill="#fff" /><path d="M4 19V8a2.800 2.800 0 0 1 5.600 0" stroke="#e8425b" /><path d="M4 12v7.500M9.600 8v11.500" stroke="#26262c" /><path d="M14.400 16V8a2.800 2.800 0 0 1 5.600 0" stroke="#25a552" /><path d="M20 7.500v5" stroke="#a98bd0" /><path d="M14.400 13v6.500M20 12v7.500" stroke="#26262c" /></svg> },
  { icon: <svg viewBox="0 0 24 24" className={task}><circle cx="12" cy="12" r="12" fill="#fff" /><path d="M9.500 6h5v4h-5zM6 11h3.500v3h5v-3H18v6.500H6z" fill="#111" /></svg> },
  { icon: <div className="flex h-6 w-6 items-center justify-center bg-[#1c1f22] text-white"><SiGithub size={21} /></div> },
  { icon: <TableauMark className={task} dim /> },
  { icon: <TableauMark className={task} dim /> },
  { icon: <div className="flex h-6 w-6 items-center justify-center rounded-full bg-[#25cc96] pb-[2px] text-[14px] font-bold text-[#1f3337]">t:</div> },
  { icon: <svg viewBox="0 0 24 24" className={task} fill="none"><path d="M4 1h19v16l-5 6H1V4z" fill="#24435e" stroke="#3f7593" strokeWidth="1.300" /><path d="M4 4h16v12l-4 4H4z" fill="#263a58" /><path d="M6 16c0-5 3-8 8-8M8 19h7M15 12v3" stroke="#3a6586" strokeDasharray="2 1" /></svg> },
  { open: true, icon: <EdgeIcon className={task} /> },
  { open: true, active: true, icon: <ChromeIcon className="ml-[1px] h-[26px] w-[26px]" /> },
  { open: true, icon: <svg viewBox="0 0 24 24" className={task} fill="none"><path d="M5 3A11 11 0 0 1 22.900 13" stroke="#fff" strokeWidth="2" /><path d="M1 11A11 11 0 0 1 4 5" stroke="#fff" strokeWidth="1.500" /><path d="M.5 14.500 7.500 7l5.500 6.500 3-3 7.300 5.500A11.800 11.800 0 0 1 .5 14.500z" fill="#fff" /><path d="m4.500 20 4-5M10 17l3-3.500 6 7" stroke="#293b3e" strokeWidth="1.200" /><circle cx="14.500" cy="7" r="1.700" fill="#fff" /></svg> },
];

function Taskbar() {
  return (
    <div className="flex h-10 shrink-0 bg-[#273a3d] font-['Open_Sans',sans-serif]">
      <div className="flex w-12 items-center justify-center bg-[#1f3337]">
        <svg viewBox="0 0 16 16" className="h-4 w-4" fill="#fff"><path d="M0 2.300 6.800 1.300v6.300H0zM7.500 1.200 16 0v7.600H7.500zM0 8.300h6.800v6.400L0 13.700zM7.500 8.300H16V16l-8.500-1.200z" /></svg>
      </div>
      <div className="flex w-[344px] items-center border border-[#c8c8c8] bg-[#f2f2f2] pl-[11px]">
        <svg viewBox="0 0 17 17" className="h-[17px] w-[17px]" fill="none" stroke="#222" strokeWidth="1.400"><circle cx="10.500" cy="6.500" r="5.300" /><path d="M6.700 10.300.8 16.200" /></svg>
        <span className="ml-[11px] pt-px text-[14.500px] tracking-[-0.27px] text-[#333]">Type here to search</span>
      </div>
      <div className="ml-[3px] flex w-[726px]">
        {apps.map((a, i) => (
          <div key={i} className={`flex w-12 shrink-0 flex-col items-center ${a.active ? "bg-[#5a696c]" : ""} ${a.gap ? "ml-px" : ""}`}>
            <div className="flex h-[38px] items-center pt-[2px]">{a.icon}</div>
            {a.open && <div className={a.active ? "h-[2px] w-12 bg-[#f5aec4]" : "h-[2px] w-[39px] bg-[#f5aec4]"} />}
          </div>
        ))}
      </div>
      <svg viewBox="0 0 12 8" className="mt-4 ml-[6px] h-2 w-3" fill="none" stroke="#fff" strokeWidth="1.300"><path d="m.8 7 5.200-5.500L11.200 7" /></svg>
      <svg viewBox="0 0 15 10" className="mt-[15px] ml-[11px] h-[10px] w-[15px]" fill="none" stroke="#fff"><path d="M.5.500h12v9H.5zM13 3.500h1.500v3H13" /><path d="M2.500 2.500h6v5h-6z" fill="#fff" /></svg>
      <svg viewBox="0 0 18 14" className="mt-[13px] ml-[8px] h-[14px] w-[18px]" fill="none" stroke="#fff"><path d="M.5 4.500h3l4-3.500v12l-4-3.500h-3zM9.500 4.500c1 1.500 1 3.500 0 5M12 3c2 2.500 2 5.500 0 8M14.500 1.500c2.700 3.300 2.700 7.700 0 11" /></svg>
      <svg viewBox="0 0 14 14" className="mt-[14px] ml-[8px] h-[14px] w-[14px]" fill="none" stroke="#8c989a"><path d="M1 13C1 6 6 1 13 1M4 13c0-5 4-9 9-9" /><path d="M7 13c0-3.500 2.500-6 6-6M10 13c0-2 1-3 3-3" stroke="#e8ecec" /><circle cx="12.300" cy="12.300" r="1" fill="#fff" /></svg>
      <svg viewBox="0 0 23 13" className="mt-[14px] ml-[8px] h-[13px] w-[23px]" fill="none" stroke="#fff"><path d="M.5.500h22v12H.5z" /><path d="M3 3.500h17M3 6.500h17" strokeDasharray="1.500 1.200" strokeWidth="1.400" /><path d="M5 9.500h13" strokeWidth="1.300" /></svg>
      <div className="ml-[6px] w-[60px] pt-[2px] text-center text-[12px] leading-[18px] tracking-[-0.45px] whitespace-nowrap text-white">
        <div>1:43 AM</div><div>10/18/2023</div>
      </div>
      <svg viewBox="0 0 26 26" className="mt-[10px] ml-[14px] h-[26px] w-[26px]">
        <path d="M1 1h16v12H8l-3 3.500V13H1z" fill="#fff" /><path d="M4 4.500h10M4 7h10M4 9.500h10" stroke="#273a3d" />
        <circle cx="16.500" cy="16" r="8" fill="#3b484b" stroke="#8a9394" />
        <text x="16.500" y="20" fontSize="11" fill="#fff" textAnchor="middle">8</text>
      </svg>
    </div>
  );
}

export default function App() {
  return (
    <div className="flex h-[768px] w-[1366px] flex-col overflow-hidden bg-[#ebebeb]">
      <TabStrip />
      <AddressBar />
      <Header />
      <Toolbar />
      <div className="flex h-[502px] shrink-0 bg-[#f2f2f2] font-['Roboto',sans-serif]">
        <Sidebar />
        <Dashboard />
      </div>
      <SheetTabs />
      <div className="h-[17px] shrink-0" />
      <Taskbar />
    </div>
  );
}
